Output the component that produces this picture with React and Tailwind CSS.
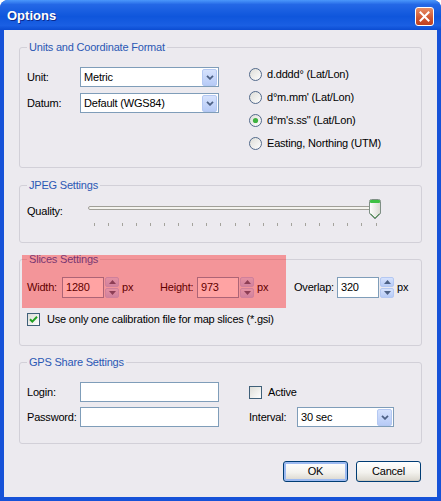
import React from 'react';

const ui = "font-['Liberation_Sans',Arial,sans-serif] text-[11px] leading-[13px] tracking-[-0.2px] text-black";

const DropButton = () => (
  <div className="ml-auto mr-[1px] flex h-[17px] w-[15px] items-center justify-center rounded-[2px] border border-[#b4c8f2] bg-[linear-gradient(to_bottom,#d6e2fd,#b7cbf6)]">
    <svg width="8" height="5" viewBox="0 0 8 5">
      <path d="M1 0.8 L4 3.8 L7 0.8" fill="none" stroke="#4d6185" strokeWidth="1.8" />
    </svg>
  </div>
);

const Combo = ({ value, className }) => (
  <div className={`flex h-[20px] items-center border border-[#7f9db9] bg-white ${className}`}>
    <span className="pl-[3px]">{value}</span>
    <DropButton />
  </div>
);

const Spin = () => (
  <div className="ml-[1px] flex h-[21px] w-[14px] flex-col gap-[1px]">
    <div className="flex flex-1 items-center justify-center rounded-[2px] border border-[#b4c8f2] bg-[linear-gradient(to_bottom,#d6e2fd,#b7cbf6)]">
      <svg width="7" height="4" viewBox="0 0 7 4"><path d="M0 4 L3.5 0 L7 4Z" fill="#4d6185" /></svg>
    </div>
    <div className="flex flex-1 items-center justify-center rounded-[2px] border border-[#b4c8f2] bg-[linear-gradient(to_bottom,#d6e2fd,#b7cbf6)]">
      <svg width="7" height="4" viewBox="0 0 7 4"><path d="M0 0 L3.5 4 L7 0Z" fill="#4d6185" /></svg>
    </div>
  </div>
);

const NumberField = ({ label, labelWidth, value, groupWidth }) => (
  <div className={`flex items-center ${groupWidth}`}>
    <span className={labelWidth}>{label}</span>
    <div className="flex h-[21px] w-[42px] items-center border border-[#7f9db9] bg-white pl-[3px]">{value}</div>
    <Spin />
    <span className="ml-[3px]">px</span>
  </div>
);

const Radio = ({ checked }) => (
  <svg width="13" height="13" viewBox="0 0 13 13">
    <defs>
      <linearGradient id="rg" x1="0" y1="0" x2="1" y2="1">
        <stop offset="0" stopColor="#dcdcd6" />
        <stop offset="1" stopColor="#ffffff" />
      </linearGradient>
    </defs>
    <circle cx="6.5" cy="6.5" r="6" fill="url(#rg)" stroke="#52698a" />
    {checked && <circle cx="6.5" cy="6.5" r="2.6" fill="#3fb23f" />}
  </svg>
);

const Check = ({ checked }) => (
  <svg width="13" height="13" viewBox="0 0 13 13">
    <defs>
      <linearGradient id="cg" x1="0" y1="0" x2="1" y2="1">
        <stop offset="0" stopColor="#dcdcd6" />
        <stop offset="1" stopColor="#ffffff" />
      </linearGradient>
    </defs>
    <rect x="0.5" y="0.5" width="12" height="12" fill="url(#cg)" stroke="#3f6079" />
    {checked && <path d="M3 6.2 L5.3 8.6 L10 3.8" fill="none" stroke="#21a121" strokeWidth="2" />}
  </svg>
);

const Group = ({ title, className, children }) => (
  <fieldset className={`mx-[15px] rounded-[3px] border border-[#d2d0d8] px-[7px] ${className}`}>
    <legend className="px-[2px] text-[#2b58b4]">{title}</legend>
    {children}
  </fieldset>
);

const Slider = () => {
  const ticks = Array.from({ length: 21 }, (_, i) => 5.5 + i * 14.1);
  return (
    <svg width="296" height="30" viewBox="0 0 296 30">
      <defs>
        <linearGradient id="th" x1="0" y1="0" x2="1" y2="0">
          <stop offset="0" stopColor="#ffffff" />
          <stop offset="1" stopColor="#d9d9d2" />
        </linearGradient>
      </defs>
      <rect x="0.5" y="7.5" width="288" height="3" rx="1.5" fill="#f4f3ee" stroke="#a09f98" />
      {ticks.map((x) => (
        <line key={x} x1={Math.round(x) + 0.5} y1="24" x2={Math.round(x) + 0.5} y2="27" stroke="#a4a39c" />
      ))}
      <path d="M281.5 2.5 Q281.5 0.5 283.5 0.5 L290.5 0.5 Q292.5 0.5 292.5 2.5 L292.5 14.5 L287 20 L281.5 14.5 Z" fill="url(#th)" stroke="#7f8f85" />
      <rect x="282" y="1" width="10" height="3" rx="1" fill="#3ec143" />
      <path d="M282.5 14.5 L287 19 L291.5 14.5" fill="none" stroke="#5a9a5e" />
    </svg>
  );
};

const XPButton = ({ children, isDefault }) => (
  <div
    className={`flex h-[21px] w-[65px] items-center justify-center rounded-[3px] border border-[#003c74] bg-[linear-gradient(to_bottom,#ffffff,#f3f2ee_55%,#d9d5cc)] ${
      isDefault ? 'shadow-[inset_0_0_0_2px_#9dbaf1]' : 'shadow-[inset_0_-1px_0_#cfcbc0]'
    }`}
  >
    {children}
  </div>
);

export default function App() {
  return (
    <div className={`flex h-[501px] w-[441px] flex-col rounded-t-[8px] bg-[#1652d8] ${ui}`}>
      {/* title bar */}
      <div className="flex h-[30px] items-center rounded-t-[8px] bg-[linear-gradient(to_bottom,#4b98fb_0%,#2468e6_15%,#0f56dc_55%,#1a5fe3_85%,#0b4cd2_100%)] pl-[7px] pr-[7px]">
        <span className="font-['Liberation_Sans',Arial,sans-serif] text-[13px] font-bold tracking-normal text-white [text-shadow:1px_1px_#0c2a8c]">
          Options
        </span>
        <div className="ml-auto mt-[3px] flex h-[19px] w-[19px] items-center justify-center rounded-[3px] border border-white bg-[linear-gradient(to_bottom,#e88d65,#cf5530_60%,#c04020)]">
          <svg width="11" height="11" viewBox="0 0 11 11">
            <path d="M1.5 1.5 L9.5 9.5 M9.5 1.5 L1.5 9.5" stroke="#fff" strokeWidth="2" strokeLinecap="square" />
          </svg>
        </div>
      </div>

      {/* body */}
      <div className="relative mx-[4px] mb-[4px] flex flex-1 flex-col bg-[#eceaef]">
        <Group title="Units and Coordinate Format" className="mt-[11px] pb-[12px]">
          <div className="flex items-start">
            <div className="flex w-[192px] flex-col gap-[6px] pt-[13px]">
              <div className="flex items-center">
                <span className="w-[53px]">Unit:</span>
                <Combo value="Metric" className="w-[139px]" />
              </div>
              <div className="flex items-center">
                <span className="w-[53px]">Datum:</span>
                <Combo value="Default (WGS84)" className="w-[139px]" />
              </div>
            </div>
            <div className="ml-[30px] flex flex-col pt-[9px]">
              {['d.dddd° (Lat/Lon)', "d°m.mm' (Lat/Lon)", 'd°m\'s.ss" (Lat/Lon)', 'Easting, Northing (UTM)'].map((t, i) => (
                <div key={t} className="flex h-[23px] items-center gap-[5px]">
                  <Radio checked={i === 2} />
                  <span>{t}</span>
                </div>
              ))}
            </div>
          </div>
        </Group>

        <Group title="JPEG Settings" className="mt-[11px] pb-[13px]">
          <div className="flex items-start pt-[7px]">
            <span className="mt-[6px] w-[61px]">Quality:</span>
            <Slider />
          </div>
        </Group>

        <Group title="Slices Settings" className="mt-[10px] pb-[19px]">
          <div className="flex items-center pt-[11px]">
            <NumberField label="Width:" labelWidth="w-[35px]" value="1280" groupWidth="w-[133px]" />
            <NumberField label="Height:" labelWidth="w-[37px]" value="973" groupWidth="w-[134px]" />
            <NumberField label="Overlap:" labelWidth="w-[43px]" value="320" groupWidth="" />
          </div>
          <div className="mt-[15px] flex h-[13px] items-center gap-[7px]">
            <Check checked />
            <span>Use only one calibration file for map slices (*.gsi)</span>
          </div>
        </Group>

        <Group title="GPS Share Settings" className="mt-[10px] pb-[16px]">
          <div className="flex flex-col gap-[5px] pt-[13px]">
            <div className="flex items-center">
              <span className="w-[53px]">Login:</span>
              <div className="h-[20px] w-[139px] border border-[#7f9db9] bg-white" />
              <div className="ml-[30px] flex items-center gap-[6px]">
                <Check />
                <span>Active</span>
              </div>
            </div>
            <div className="flex items-center">
              <span className="w-[53px]">Password:</span>
              <div className="h-[20px] w-[139px] border border-[#7f9db9] bg-white" />
              <span className="ml-[30px] w-[48px]">Interval:</span>
              <Combo value="30 sec" className="w-[97px]" />
            </div>
          </div>
        </Group>

        <div className="mr-[16px] mt-[17px] flex justify-end gap-[8px]">
          <XPButton isDefault>OK</XPButton>
          <XPButton>Cancel</XPButton>
        </div>

        {/* highlight over the slice size fields */}
        <div className="pointer-events-none absolute left-[18px] top-[225px] h-[53px] w-[264px] bg-[rgba(255,0,0,0.36)]" />
      </div>
    </div>
  );
}
